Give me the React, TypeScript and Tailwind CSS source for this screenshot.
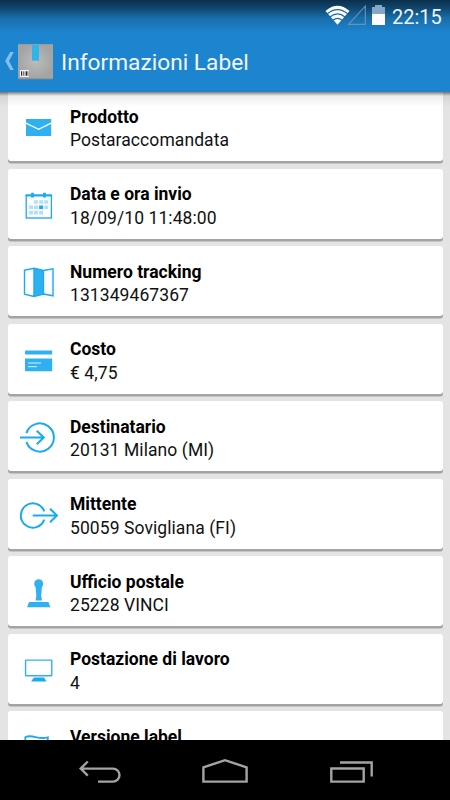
import type { ReactNode } from "react";

const BLUE = "#1aaaf0";
const FILL = "#2fb1f1";

type Item = { title: string; value?: string; top: number; icon: ReactNode };

const items: Item[] = [
  {
    title: "Prodotto",
    value: "Postaraccomandata",
    top: 91,
    icon: (
      <>
        <rect x="26" y="119" width="25.2" height="17" fill={FILL} />
        <path d="M26 123.2L38.6 129.4L51.2 123.2" fill="none" stroke="#fff" strokeWidth="1.3" />
      </>
    ),
  },
  {
    title: "Data e ora invio",
    value: "18/09/10 11:48:00",
    top: 168.5,
    icon: (
      <>
        <rect x="26.2" y="194.7" width="25.2" height="22.8" fill="none" stroke={BLUE} strokeWidth="1.3" />
        <path d="M25.6 195H52" stroke={BLUE} strokeWidth="2" />
        <path d="M32.5 192.2V197M44.5 192.2V197" stroke={BLUE} strokeWidth="2.8" />
        <path
          d="M34 199.7h4v3.6h-4zM39.1 199.7h4v3.6h-4zM44.2 199.7h4v3.6h-4zM29 205h4v3.6h-4zM34 205h4v3.6h-4zM44.2 205h4v3.6h-4zM29 210.3h4v3.6h-4zM34 210.3h4v3.6h-4zM39.1 210.3h4v3.6h-4z"
          fill="#b3e0f9"
        />
        <rect x="39.1" y="205" width="4" height="3.6" fill={BLUE} />
      </>
    ),
  },
  {
    title: "Numero tracking",
    value: "131349467367",
    top: 246,
    icon: (
      <>
        <path d="M34 268.2L43.5 270.5V294L34 296.5Z" fill={FILL} />
        <path
          d="M24.5 270.3L34 268.2L43.5 270.5L53 268.8V295.8L43.5 294L34 296.5L24.5 294.3ZM34 268.2V296.5M43.5 270.5V294"
          fill="none"
          stroke={BLUE}
          strokeWidth="1.4"
        />
      </>
    ),
  },
  {
    title: "Costo",
    value: "€ 4,75",
    top: 323.5,
    icon: (
      <>
        <path d="M25 354V351Q25 350 26 350H51.2Q52.2 350 52.2 351V354Z" fill={FILL} />
        <path d="M25 358H52.2V369.7Q52.2 370.7 51.2 370.7H26Q25 370.7 25 369.7Z" fill={FILL} />
        <path d="M28 362.5H41M28 366.2H37" stroke="#d9f1fd" strokeWidth="1" />
      </>
    ),
  },
  {
    title: "Destinatario",
    value: "20131 Milano (MI)",
    top: 401,
    icon: (
      <path
        d="M26.4 433.1A14.1 14.1 0 1 1 26.4 441.9M20 437.5H43.8M36.8 430.8L43.8 437.5L36.8 444.2"
        fill="none"
        stroke={BLUE}
        strokeWidth="2"
      />
    ),
  },
  {
    title: "Mittente",
    value: "50059 Sovigliana (FI)",
    top: 478.5,
    icon: (
      <path
        d="M44.3 510.9A12.1 12.1 0 1 0 44.3 519.1M32.7 515H57M50 508.3L57 515L50 521.7"
        fill="none"
        stroke={BLUE}
        strokeWidth="2"
      />
    ),
  },
  {
    title: "Ufficio postale",
    value: "25228 VINCI",
    top: 556,
    icon: (
      <>
        <path
          d="M34.2 583.8A4.5 4.5 0 0 1 43.2 583.8C43.2 585.7 42 586.5 41.8 588L41.2 596L42 600.5H35.5L36.3 596L35.7 588C35.4 586.5 34.2 585.7 34.2 583.8Z"
          fill={FILL}
        />
        <path d="M29 602H48.5L50.3 607.3H27Z" fill={FILL} />
      </>
    ),
  },
  {
    title: "Postazione di lavoro",
    value: "4",
    top: 633.5,
    icon: (
      <>
        <rect x="25.6" y="659.6" width="26.2" height="15.7" rx="0.6" fill="none" stroke={FILL} strokeWidth="1.4" />
        <path d="M34 677H44L46.5 681H31Z" fill={BLUE} />
      </>
    ),
  },
  {
    title: "Versione label",
    top: 711,
    icon: (
      <path
        d="M25.3 757V737.3C32 733.5 38 740.3 47.8 737.3V750C39 753 32 747 25.3 750.5"
        fill="none"
        stroke={BLUE}
        strokeWidth="1.8"
      />
    ),
  },
];

function InfoCard({ title, value, top, icon }: Item) {
  return (
    <div className="flex h-[70px] shrink-0 rounded-[3px] bg-white shadow-[0_2.5px_0_#a3a3a3]">
      <svg className="h-[70px] w-[62px] shrink-0" viewBox={`8 ${top} 62 70`}>
        {icon}
      </svg>
      <div className="flex flex-col pt-[14.5px] text-[17.5px] leading-[23.5px] whitespace-nowrap">
        <span className="font-bold text-black">{title}</span>
        {value && <span className="tracking-[0.08px] text-[#111]">{value}</span>}
      </div>
    </div>
  );
}

function Header() {
  return (
    <header className="relative z-10 h-[92px] shrink-0 bg-[#1d84cf] bg-[linear-gradient(to_bottom,#0b2f4a_0,#10466e_8px,#186da9_18px,#1d84cf_32px)]">
      <div className="flex h-8 items-center justify-end pr-[8px]">
        <svg className="h-8 w-[70px]" viewBox="322 0 70 32">
          <path d="M325.5 11Q337.5 0.5 349.5 11L337.5 24.7Z" fill="#fff" />
          <path
            d="M327.3 13.7Q337.5 5.4 347.7 13.7M330 17Q337.5 10.8 345 17M333 20.3Q337.5 16.6 342 20.3"
            fill="none"
            stroke="#19679f"
            strokeWidth="1.2"
          />
          <path d="M348.5 24.4L365.3 6.2V24.4Z" fill="none" stroke="#6293b9" strokeWidth="1.2" />
          <path d="M372 14V7.5Q372 7 372.5 7H375V5H382V7H384.5Q385 7 385 7.5V14Z" fill="#83a9c6" />
          <path d="M372 14H385V24.5Q385 25 384.5 25H372.5Q372 25 372 24.5Z" fill="#fff" />
        </svg>
        <span className="w-[50px] whitespace-nowrap pt-px text-[20px] leading-8 text-[#eef5fa]">22:15</span>
      </div>
      <div className="flex h-[60px] items-center">
        <svg className="h-[60px] w-[61px] shrink-0" viewBox="0 32 61 60">
          <defs>
            <radialGradient id="box">
              <stop offset="0" stopColor="#bcbcbc" />
              <stop offset="1" stopColor="#a4a4a4" />
            </radialGradient>
          </defs>
          <path d="M10.2 52H13.8L9 61L13.8 70H10.2L5.2 61Z" fill="#80c0ee" />
          <rect x="18" y="44.3" width="35" height="35.2" rx="1" fill="#77898f" />
          <rect x="18" y="44" width="35" height="34.4" rx="1" fill="url(#box)" />
          <path d="M18.5 44.4H52.5" stroke="#8d999f" strokeWidth="0.8" />
          <path d="M32 45H39V61L37.8 60.2L36.6 61L35.5 60.2L34.4 61L33.2 60.2L32 61Z" fill="#2fb4eb" />
          <rect x="20" y="70" width="9" height="7" rx="0.7" fill="#f5f5f5" />
          <path d="M21.6 71.3V75.8M26.6 71.3V75.8" stroke="#222" strokeWidth="1.1" />
          <path d="M23.4 71.3V75.8M25.1 71.3V75.8M28 71.3V75.8" stroke="#333" strokeWidth="0.7" />
        </svg>
        <h1 className="whitespace-nowrap pt-[2px] text-[22.7px] leading-[58px] text-[#f1f7fc]">Informazioni Label</h1>
      </div>
      <div className="absolute inset-x-0 top-[92px] h-[15px] bg-[linear-gradient(to_bottom,rgba(0,0,0,0.5)_0,rgba(0,0,0,0.28)_2px,rgba(0,0,0,0.07)_4px,transparent_15px)]" />
    </header>
  );
}

function NavigationBar() {
  return (
    <nav className="relative h-[60px] shrink-0 bg-black">
      <svg className="h-[60px] w-[450px]" viewBox="0 740 450 60" fill="none" stroke="#a3a3a3" strokeWidth="2.4">
        <path d="M87.8 761.5L80.7 768.6L87.8 775.7M81 768.6H113A6.5 6.5 0 0 1 113 781.6H98" />
        <path d="M203.4 781.6V767.3L225 760.2L246.6 767.3V781.6Z" />
        <path d="M331.3 768.5H363.7V781.6H331.3ZM340 762.5H371.7V776.5" />
      </svg>
    </nav>
  );
}

export default function App() {
  return (
    <div className="flex h-[800px] w-[450px] flex-col overflow-hidden bg-[#e4e4e4] font-[Roboto,sans-serif]">
      <Header />
      <main className="flex min-h-0 flex-1 flex-col overflow-hidden">
        <div className="-mt-[1px] flex flex-col gap-[7.5px] pr-[7px] pl-2">
          {items.map((item) => (
            <InfoCard key={item.title} {...item} />
          ))}
        </div>
      </main>
      <NavigationBar />
    </div>
  );
}
